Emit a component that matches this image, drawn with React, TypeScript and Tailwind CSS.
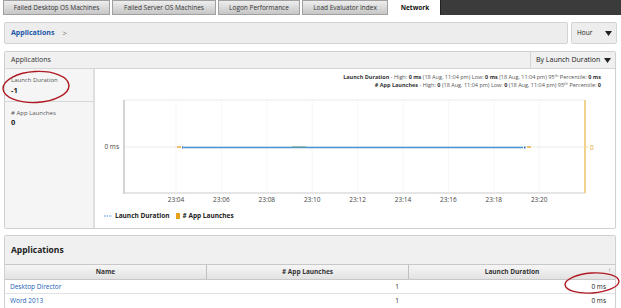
import React from 'react';

const tabs = [
  { label: 'Failed Desktop OS Machines', w: 'w-[107px]' },
  { label: 'Failed Server OS Machines', w: 'w-[104px]' },
  { label: 'Logon Performance', w: 'w-[82px]' },
  { label: 'Load Evaluator Index', w: 'w-[86px]' },
];

const xTicks = ['23:04', '23:06', '23:08', '23:10', '23:12', '23:14', '23:16', '23:18', '23:20'];

const Caret = () => (
  <svg width="7" height="5" viewBox="0 0 7 5" className="shrink-0">
    <path d="M0 0 L7 0 L3.5 5 Z" fill="#222" />
  </svg>
);

const Chart: React.FC = () => {
  const left = 29;
  const right = 490;
  const top = 8;
  const bottom = 101;
  const zeroY = 55;
  return (
    <svg width="518" height="112" viewBox="0 0 518 112" className="block">
      <line x1={left} y1={top} x2={right} y2={top} stroke="#ececec" strokeWidth="1" />
      <line x1={left} y1={bottom} x2={right} y2={bottom} stroke="#dcdcdc" strokeWidth="1.5" />
      {xTicks.map((t, i) => {
        const x = 81 + i * 45.4;
        return (
          <g key={t}>
            <line x1={x} y1={top} x2={x} y2={bottom} stroke="#e8e8e8" strokeWidth="0.8" strokeDasharray="1 1" />
            <text x={x} y={110} fontSize="6.5" textAnchor="middle" fill="#444">{t}</text>
          </g>
        );
      })}
      <line x1={left} y1={zeroY} x2={right} y2={zeroY} stroke="#e6e6e6" strokeWidth="0.8" />
      <line x1={left} y1={top} x2={left} y2={bottom + 1} stroke="#d4d4d4" strokeWidth="2" />
      <line x1={right} y1={top} x2={right} y2={bottom} stroke="#f2d38e" strokeWidth="2" />
      <text x={24} y={zeroY + 2} fontSize="6.5" textAnchor="end" fill="#444">0 ms</text>
      <line x1={right} y1={zeroY} x2={right + 3} y2={zeroY} stroke="#f2d38e" strokeWidth="1" />
      <text x={495} y={zeroY + 2.5} fontSize="6.5" fill="#e0a020">0</text>
      <line x1={82} y1={zeroY} x2={86} y2={zeroY} stroke="#e6a11c" strokeWidth="1.2" />
      <line x1={432} y1={zeroY} x2={436} y2={zeroY} stroke="#e6a11c" strokeWidth="1.2" />
      <line x1={89} y1={zeroY + 0.5} x2={428} y2={zeroY + 0.5} stroke="#4a93d4" strokeWidth="1.5" />
      <rect x={87} y={zeroY - 0.5} width="1.5" height="2" fill="#2d6fb5" />
      <rect x={429} y={zeroY - 0.5} width="1.5" height="2" fill="#2d6fb5" />
      <line x1={197} y1={zeroY} x2={211} y2={zeroY} stroke="#6a9a8a" strokeWidth="1" />
    </svg>
  );
};

export default function App() {
  return (
    <div className="relative w-[621px] h-[308px] overflow-hidden bg-white font-['Open_Sans',sans-serif] text-[#333]">
      {/* tabs */}
      <div className="flex h-[15px] pl-[3px]">
        {tabs.map((t) => (
          <div
            key={t.label}
            className={`${t.w} mr-[2px] flex items-center justify-center border border-[#a0a0a0] bg-gradient-to-b from-[#eeeeee] to-[#c6c6c6] text-[6.5px] text-[#333]`}
          >
            {t.label}
          </div>
        ))}
        <div className="w-[50px] flex items-center justify-center bg-white text-[6.5px] font-bold text-[#111]">Network</div>
        <div className="flex-1 bg-[#3b3b3b] border-l border-[#222]" />
      </div>

      {/* breadcrumb */}
      <div className="flex h-[22px] mt-[7px] px-[4px] gap-[3px]">
        <div className="flex-1 flex items-center rounded-[2px] border border-[#d4d4d4] bg-[#ededed] pl-[6px]">
          <span className="text-[7px] font-bold text-[#1756a8]">Applications</span>
          <span className="ml-[8px] text-[8px] text-[#777]">&gt;</span>
        </div>
        <div className="w-[46px] flex items-center justify-between rounded-[2px] border border-[#d4d4d4] bg-[#ededed] pl-[5px] pr-[4px] text-[6.5px] text-[#222]">
          <span>Hour</span>
          <Caret />
        </div>
      </div>

      {/* applications chart panel */}
      <div className="mt-[7px] mx-[4px] mr-[5px] h-[178px] flex flex-col rounded-[2px] border border-[#d0d0d0]">
        <div className="h-[17px] flex items-center justify-between bg-[#f0f0f0] border-b border-[#d6d6d6]">
          <span className="pl-[6px] text-[7px] text-[#333]">Applications</span>
          <div className="h-full w-[85px] flex items-center justify-between border-l border-[#d6d6d6] pl-[5px] pr-[4px] text-[7px] text-[#222]">
            <span>By Launch Duration</span>
            <Caret />
          </div>
        </div>
        <div className="flex flex-1">
          <div className="w-[90px] bg-[#f5f5f5] border-r-[2px] border-[#dedede]">
            <div className="h-[33px] pl-[6px] pt-[7px] border-b border-[#d8d8d8]">
              <div className="text-[6px] leading-[8px] text-[#555]">Launch Duration</div>
              <div className="text-[7.5px] leading-[12px] font-bold text-[#222]">-1</div>
            </div>
            <div className="pl-[6px] pt-[7px]">
              <div className="text-[6px] leading-[8px] text-[#555]">&#35; App Launches</div>
              <div className="text-[7.5px] leading-[10px] font-bold text-[#222]">0</div>
            </div>
          </div>
          <div className="flex-1 flex flex-col">
            <div className="pt-[4px] pr-[14px] text-right text-[5.5px] leading-[8px] text-[#555]">
              <div>
                <b className="text-[#333]">Launch Duration</b> - High: <b className="text-[#333]">0 ms</b> (18 Aug, 11:04 pm) Low: <b className="text-[#333]">0 ms</b> (18 Aug, 11:04 pm) 95<sup className="text-[4px]">th</sup> Percentile: <b className="text-[#333]">0 ms</b>
              </div>
              <div>
                <b className="text-[#333]">&#35; App Launches</b> - High: <b className="text-[#333]">0</b> (18 Aug, 11:04 pm) Low: <b className="text-[#333]">0</b> (18 Aug, 11:04 pm) 95<sup className="text-[4px]">th</sup> Percentile: <b className="text-[#333]">0</b>
              </div>
            </div>
            <div className="mt-[3px]">
              <Chart />
            </div>
            <div className="mt-[7px] pl-[9px] flex items-center text-[6.5px] font-bold text-[#222]">
              <svg width="8" height="4" viewBox="0 0 8 4" className="mr-[3px]">
                <line x1="0" y1="2" x2="8" y2="2" stroke="#4a93d4" strokeWidth="1.2" strokeDasharray="1.5 1" />
              </svg>
              <span>Launch Duration</span>
              <span className="ml-[6px] mr-[3px] inline-block w-[4px] h-[6px] bg-[#e6a11c]" />
              <span>&#35; App Launches</span>
            </div>
          </div>
        </div>
      </div>

      {/* applications table panel */}
      <div className="mt-[6px] mx-[4px] mr-[5px] rounded-[2px] border border-[#d0d0d0]">
        <div className="h-[28px] flex items-center bg-[#f0f0f0] pl-[6px] text-[8.5px] font-bold text-[#222]">Applications</div>
        <div className="flex h-[16px] bg-gradient-to-b from-[#f6f6f6] to-[#e2e2e2] border-y border-[#c8c8c8] text-[6.5px] font-bold text-[#333]">
          <div className="w-[202px] flex items-center justify-center border-r border-[#c0c0c0]">Name</div>
          <div className="w-[202px] flex items-center justify-center border-r border-[#c0c0c0]">&#35; App Launches</div>
          <div className="relative flex-1 flex items-center justify-center">
            Launch Duration
            <span className="absolute right-[4px] top-[1px] text-[6px] font-normal text-[#888]">&#8593;</span>
          </div>
        </div>
        {[
          { name: 'Desktop Director', n: '1', d: '0 ms' },
          { name: 'Word 2013', n: '1', d: '0 ms' },
        ].map((r, i) => (
          <div key={r.name} className={`flex h-[14px] items-center text-[6.5px] ${i === 0 ? 'border-b border-[#e2e2e2]' : ''}`}>
            <div className="w-[202px] pl-[5px] text-[#1a62b8]">{r.name}</div>
            <div className="w-[202px] pr-[10px] text-right text-[#222]">{r.n}</div>
            <div className="flex-1 pr-[9px] text-right text-[#222]">{r.d}</div>
          </div>
        ))}
      </div>

      {/* red annotation circles */}
      <svg className="absolute left-0 top-0 pointer-events-none" width="621" height="308">
        <ellipse cx="36" cy="87" rx="33" ry="15.5" fill="none" stroke="#b01a22" strokeWidth="1.4" transform="rotate(-3 36 87)" />
        <ellipse cx="592" cy="283" rx="27" ry="10" fill="none" stroke="#b01a22" strokeWidth="1.4" transform="rotate(-4 592 283)" />
      </svg>
    </div>
  );
}
